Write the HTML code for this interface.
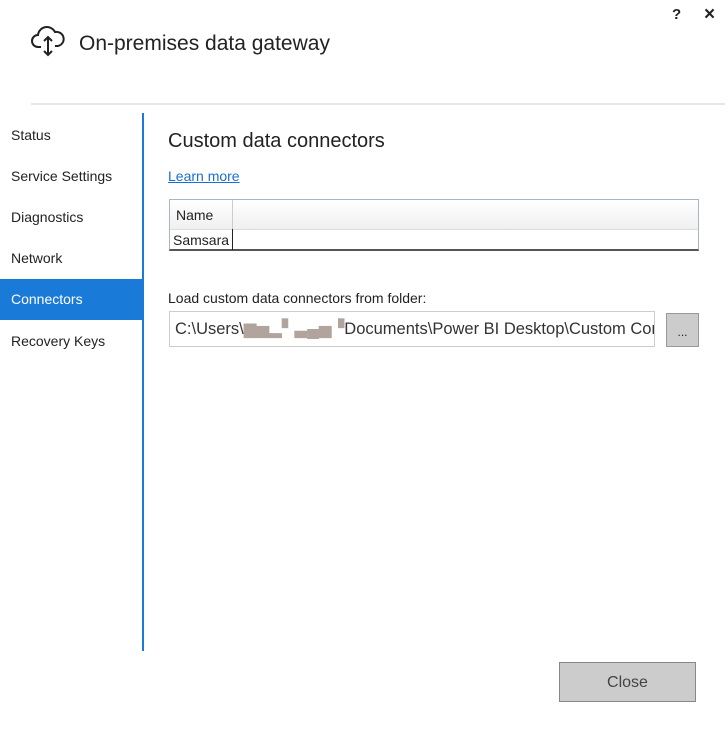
<!DOCTYPE html>
<html><head><style>
body{margin:0;width:727px;height:735px;background:#fff;font-family:"Liberation Sans",sans-serif;color:#222;position:relative;overflow:hidden}
.a{position:absolute;white-space:nowrap}
.nav{position:absolute;left:0;width:143px;height:41px;line-height:41px;padding-left:11px;box-sizing:border-box;font-size:14px;color:#222}
</style></head><body>
<svg class="a" style="left:30px;top:23px" width="36" height="36" viewBox="0 0 36 36" fill="none" stroke="#222" stroke-width="2">
<path d="M11 24H8a6 6 0 0 1 0-12a9 9 0 0 1 17-3a7 7 0 0 1 3 14h-3"/>
<path d="M18 14v18M14 18l4-4l4 4M14 28l4 4l4-4"/>
</svg>
<div class="a" style="left:79px;top:32px;font-size:21px;color:#222">On-premises data gateway</div>
<div class="a" style="left:672px;top:6px;font-size:15px;font-weight:bold">?</div>
<div class="a" style="left:704px;top:4px;font-size:19px;font-weight:bold">×</div>
<div class="a" style="left:31px;top:103px;width:694px;height:2px;background:#e6e6e6"></div>
<div class="a" style="left:142px;top:113px;width:2px;height:538px;background:#1a7ad8"></div>
<div class="nav" style="top:115px">Status</div>
<div class="nav" style="top:156px">Service Settings</div>
<div class="nav" style="top:197px">Diagnostics</div>
<div class="nav" style="top:238px">Network</div>
<div class="nav" style="top:279px;background:#1a7ad8;color:#fff">Connectors</div>
<div class="nav" style="top:321px">Recovery Keys</div>
<div class="a" style="left:168px;top:130px;font-size:20px">Custom data connectors</div>
<div class="a" style="left:168px;top:168px;font-size:14px;color:#1a6fd0;text-decoration:underline">Learn more</div>
<div class="a" style="left:169px;top:199px;width:530px;height:52px;border:1px solid #a9b4c4;border-bottom:2px solid #555;box-sizing:border-box">
 <div class="a" style="left:0;top:0;width:528px;height:29px;background:linear-gradient(#fff,#f0f0f0);border-bottom:1px solid #ddd"></div>
 <div class="a" style="left:62px;top:0;width:1px;height:50px;background:#ccc"></div>
 <div class="a" style="left:62px;top:29px;width:1px;height:21px;background:#222"></div>
 <div class="a" style="left:6px;top:7px;font-size:14px">Name</div>
 <div class="a" style="left:3px;top:32px;font-size:14px">Samsara</div>
</div>
<div class="a" style="left:168px;top:290px;font-size:14px">Load custom data connectors from folder:</div>
<div class="a" style="left:169px;top:311px;width:486px;height:36px;border:1px solid #ccc;box-sizing:border-box;font-size:16.5px;line-height:34px;padding-left:5px;color:#333;overflow:hidden">C:\Users\<span style="color:#b0a49c">▆▅▂▘▃▄▅▝</span>Documents\Power BI Desktop\Custom Connectors</div>
<div class="a" style="left:666px;top:313px;width:33px;height:34px;background:#ccc;border:1px solid #999;box-sizing:border-box;font-size:12px;text-align:center;line-height:36px">...</div>
<div class="a" style="left:559px;top:662px;width:137px;height:40px;background:#ccc;border:1px solid #888;box-sizing:border-box;font-size:16px;text-align:center;line-height:40px;color:#444">Close</div>
</body></html>
